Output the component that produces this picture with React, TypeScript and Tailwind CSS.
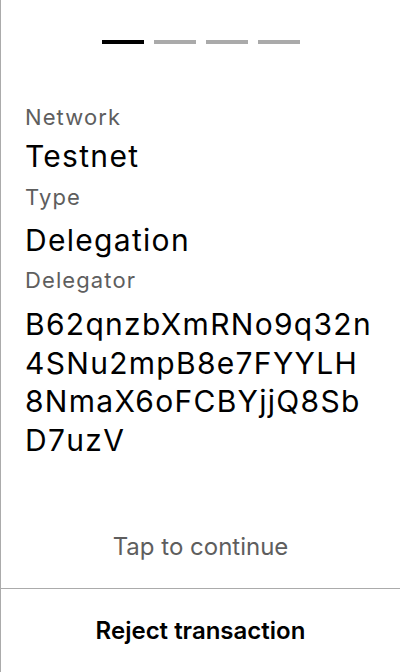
import React from 'react';

// address lines as shown on the device screen
const delegator = ['B62qnzbXmRNo9q32n', '4SNu2mpB8e7FYYLH', '8NmaX6oFCBYjjQ8Sb', 'D7uzV'];

const fields = [
  { label: 'Network', value: ['Testnet'], labelGap: 'mt-0', valueGap: 'mt-[6px]' },
  { label: 'Type', value: ['Delegation'], labelGap: 'mt-[7px]', valueGap: 'mt-[10px]' },
  { label: 'Delegator', value: delegator, labelGap: 'mt-[7px]', valueGap: 'mt-[11px]' },
];

function App() {
  return (
    <div
      className="h-[672px] w-[400px] flex flex-col bg-white border-l border-[#ababab] text-black"
      style={{ fontFamily: 'Inter, "Noto Sans", sans-serif' }}
    >
      <div className="flex-1 flex flex-col">
        <div className="flex justify-center gap-[10px] pt-10">
          <span className="h-1 w-[42px] bg-black" />
          <span className="h-1 w-[42px] bg-[#aaaaaa]" />
          <span className="h-1 w-[42px] bg-[#aaaaaa]" />
          <span className="h-1 w-[42px] bg-[#aaaaaa]" />
        </div>

        <div className="mt-[59px] px-6">
          {fields.map((f) => (
            <div key={f.label} className={f.labelGap}>
              <div className="text-[22px] leading-[28px] tracking-[1.1px] text-[#5e5e5e]">{f.label}</div>
              <div className={`${f.valueGap} text-[30px] leading-[38.5px] tracking-[1.3px]`}>
                {f.value.map((line) => (
                  <div key={line} className="h-[38.5px] whitespace-nowrap">
                    {line}
                  </div>
                ))}
              </div>
            </div>
          ))}
        </div>

        <div className="mt-auto pb-[27px] text-center text-[24px] leading-[28px] text-[#5e5e5e]">
          Tap to continue
        </div>
      </div>

      <button className="h-[84px] w-full border-t border-[#ababab] text-[24px] leading-[36px] font-semibold">
        Reject transaction
      </button>
    </div>
  );
}

export default App;
